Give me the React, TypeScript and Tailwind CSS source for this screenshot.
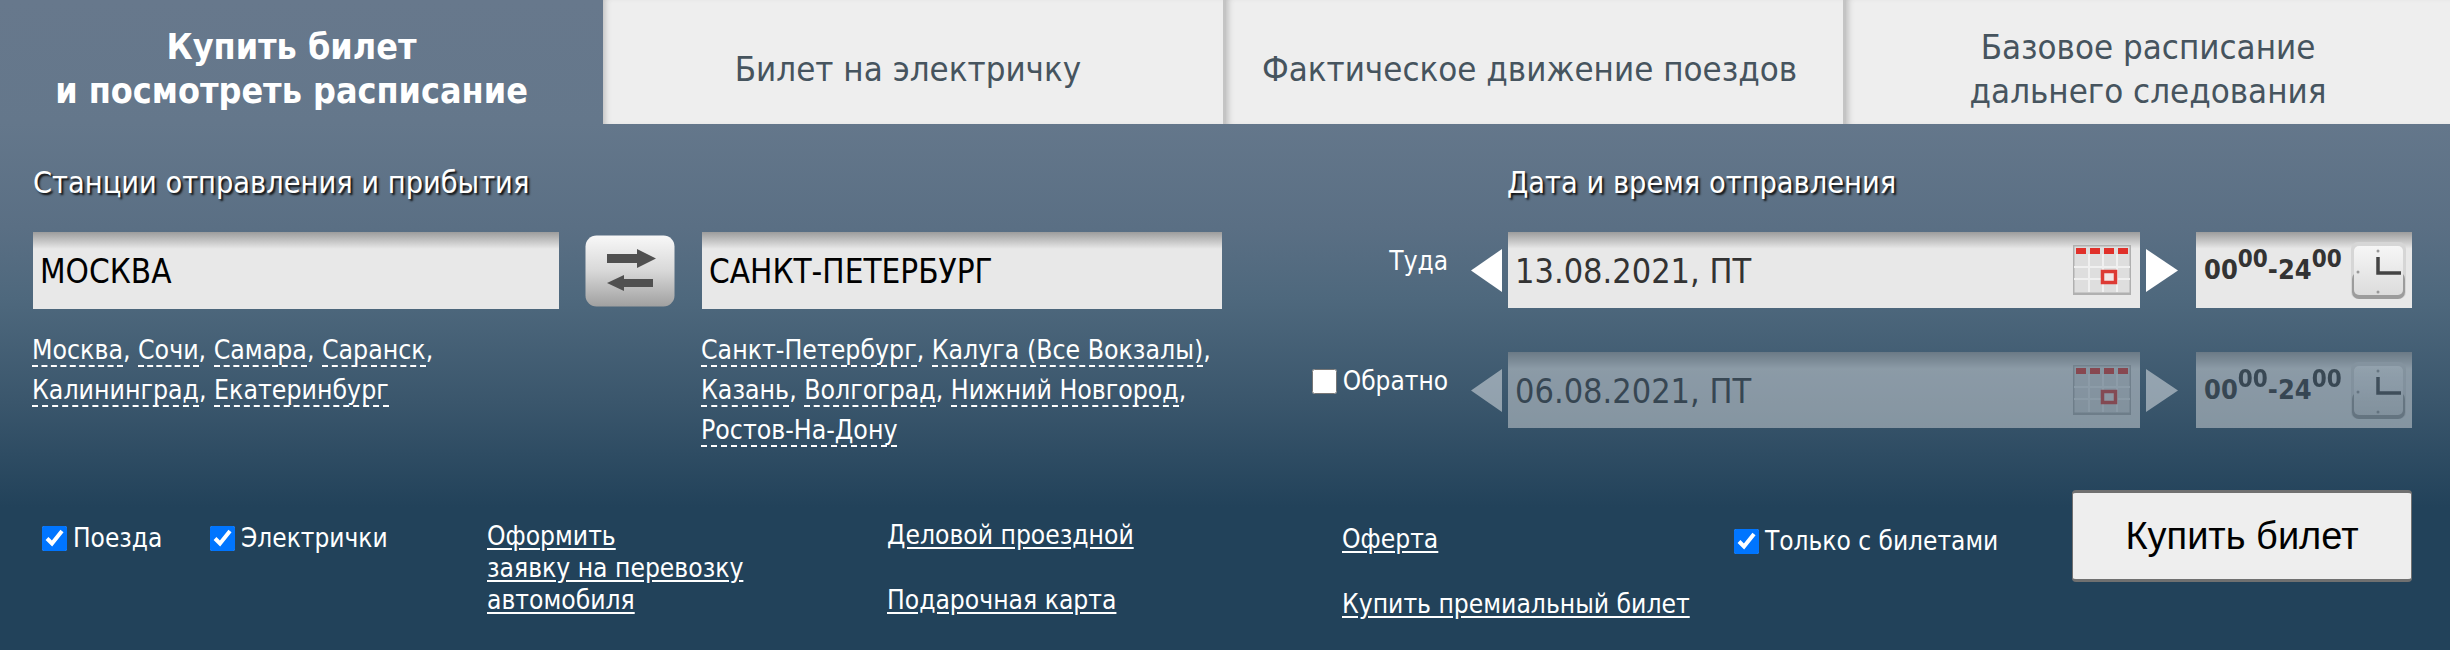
import React from 'react';

const FONT = "[font-family:'DejaVu_Sans_Condensed','DejaVu_Sans',sans-serif]";
const heading = "text-[30.4px] leading-[36px] whitespace-nowrap text-white [text-shadow:2px_2px_2px_#111]";
const fieldBg = "bg-[linear-gradient(#9c9c9c,#e8e8e8_22%,#e8e8e8)]";

const tabs = [
  ['Билет на электричку'],
  ['Фактическое движение поездов'],
  ['Базовое расписание', 'дальнего следования'],
];

const Tab = ({ lines, className }: { lines: string[]; className: string }) => (
  <div className={`bg-[#eeeeee] flex flex-col items-center justify-center pt-[14px] text-[34.6px] leading-[44px] whitespace-nowrap text-[#46545e] shadow-[inset_6px_0_6px_-4px_#bbb] ${className}`}>
    {lines.map((l) => <span key={l}>{l}</span>)}
  </div>
);

const CityLinks = ({ cities, breaks }: { cities: string[]; breaks: number[] }) => (
  <div className="mt-[21px] text-[26.4px] leading-[40px] whitespace-nowrap text-white">
    {cities.map((c, i) => (
      <React.Fragment key={c}>
        <span className="border-b-2 border-dashed border-white">{c}</span>
        {i < cities.length - 1 ? ', ' : ''}
        {breaks.includes(i) && <br />}
      </React.Fragment>
    ))}
  </div>
);

const StationInput = ({ value, className }: { value: string; className: string }) => (
  <input
    readOnly
    value={value}
    className={`h-[77px] pl-[7px] pt-[2px] text-[33px] text-black outline-none ${fieldBg} ${className}`}
  />
);

const SwapIcon = () => (
  <svg width="90" height="72" viewBox="0 0 90 72">
    <defs>
      <linearGradient id="swapBg" x1="0" y1="0" x2="0" y2="1">
        <stop offset="0" stopColor="#f8f8f8" />
        <stop offset="0.5" stopColor="#d8d8d8" />
        <stop offset="1" stopColor="#a0a0a0" />
      </linearGradient>
    </defs>
    <rect x="0.5" y="0.5" width="89" height="71" rx="11" fill="url(#swapBg)" />
    <path d="M22 19h30v-5l19 9.5-19 9.5v-5H22z" fill="#505050" />
    <path d="M68 44H39v-4L22 48l17 8v-4h29z" fill="#505050" />
  </svg>
);

const CalendarIcon = () => (
  <svg width="58" height="50" viewBox="0 0 58 50" className="shrink-0">
    <rect width="58" height="50" fill="#b0b0b0" />
    <rect x="1.5" y="1.5" width="55" height="46" fill="#dedede" />
    {[3, 17, 31, 45].map((x) => <rect key={x} x={x} y="3" width="10" height="6" fill="#e0302a" />)}
    {[15, 29, 43].map((x) => <rect key={x} x={x} y="9" width="2" height="38" fill="#f0f0f0" />)}
    {[21, 33].map((y) => <rect key={y} x="1" y={y} width="56" height="2" fill="#f0f0f0" />)}
    <rect x="29.5" y="26.5" width="13" height="11" fill="#f2e6e6" stroke="#dd3a34" strokeWidth="3.5" />
  </svg>
);

const ClockIcon = () => (
  <svg width="55" height="57" viewBox="0 0 55 57" className="shrink-0">
    <defs>
      <linearGradient id="clockFace" x1="0" y1="0" x2="0" y2="1">
        <stop offset="0" stopColor="#f6f6f6" />
        <stop offset="1" stopColor="#dcdcdc" />
      </linearGradient>
    </defs>
    <rect x="0" y="0" width="55" height="57" rx="7" fill="#d6d6d6" />
    <rect x="1" y="30" width="53" height="27" rx="7" fill="#9c9c9c" />
    <rect x="3" y="4" width="49" height="49" rx="5" fill="url(#clockFace)" />
    <path d="M27 15v16h23" fill="none" stroke="#444" strokeWidth="3.5" />
    <circle cx="27" cy="9" r="1.5" fill="#999" />
    <circle cx="7" cy="30" r="1.5" fill="#999" />
    <circle cx="27" cy="50" r="1.5" fill="#999" />
  </svg>
);

const Triangle = ({ left }: { left?: boolean }) => (
  <svg width="32" height="43" viewBox="0 0 32 43" className="shrink-0">
    <path d={left ? 'M32 0v43L1 21.5z' : 'M0 0v43l32-21.5z'} fill="#fff" />
  </svg>
);

const DateRow = ({ date, disabled, label }: { date: string; disabled?: boolean; label: React.ReactNode }) => (
  <div className="flex items-center">
    <div className="w-[208px] h-[59px] self-start flex items-center justify-end gap-[6px] text-[26px] text-white">
      {label}
    </div>
    <div className={`flex items-center ${disabled ? 'opacity-45' : ''}`}>
      <div className="ml-[22px]"><Triangle left /></div>
      <div className={`ml-[6px] w-[632px] h-[76px] pl-[7px] pr-[9px] flex items-center justify-between text-[34px] text-[#333] ${fieldBg}`}>
        <span className="pt-[2px]">{date}</span>
        <CalendarIcon />
      </div>
      <div className="ml-[6px]"><Triangle /></div>
      <div className={`ml-[18px] w-[216px] h-[76px] pl-[8px] pr-[6px] flex items-center justify-between text-[27px] font-bold text-[#333] ${fieldBg}`}>
        <span>00<sup className="text-[24px]">00</sup>-24<sup className="text-[24px]">00</sup></span>
        <ClockIcon />
      </div>
    </div>
  </div>
);

const Check = ({ label, checked = true }: { label: string; checked?: boolean }) => (
  <label className="flex items-center gap-[6px] text-[26px] whitespace-nowrap text-white">
    <input type="checkbox" readOnly checked={checked} className="w-[25px] h-[25px] m-0 accent-[#0075ff]" />
    {label}
  </label>
);

const BottomLink = ({ children }: { children: React.ReactNode }) => (
  <a className="underline underline-offset-[3px] text-[26.2px] leading-[32px] whitespace-nowrap text-white">{children}</a>
);

export default function App() {
  return (
    <div className={`w-[2450px] h-[650px] overflow-hidden flex flex-col bg-[linear-gradient(#67788c,#64778b_19%,#5a6f84_35%,#4e687d_46%,#3a566c_62%,#22425a_78%,#22425a)] ${FONT}`}>
      <div className="flex h-[124px]">
        <div className="w-[603px] flex flex-col items-center justify-center pt-[14px] pr-[20px] text-[35.6px] leading-[44px] font-bold whitespace-nowrap text-white">
          <span>Купить билет</span>
          <span>и посмотреть расписание</span>
        </div>
        <Tab lines={tabs[0]} className="w-[620px] pr-[10px]" />
        <Tab lines={tabs[1]} className="w-[620px] pr-[10px] border-l-[3px] border-[#c4c4c4]" />
        <Tab lines={tabs[2]} className="flex-1 border-l-[3px] border-[#c4c4c4]" />
      </div>

      <div className="flex pt-[41px]">
        <div className="w-[1240px] pl-[32px] shrink-0">
          <div className={`${heading} pl-px`}>Станции отправления и прибытия</div>
          <div className="flex mt-[31px]">
            <div className="w-[527px]">
              <StationInput value="МОСКВА" className="w-full ml-px" />
              <CityLinks cities={['Москва', 'Сочи', 'Самара', 'Саранск', 'Калининград', 'Екатеринбург']} breaks={[3]} />
            </div>
            <div className="ml-[27px] mt-[3px] shrink-0"><SwapIcon /></div>
            <div className="ml-[26px] w-[540px]">
              <StationInput value="САНКТ-ПЕТЕРБУРГ" className="w-[520px] ml-px" />
              <CityLinks cities={['Санкт-Петербург', 'Калуга (Все Вокзалы)', 'Казань', 'Волгоград', 'Нижний Новгород', 'Ростов-На-Дону']} breaks={[1, 4]} />
            </div>
          </div>
        </div>
        <div className="flex-1">
          <div className={`${heading} ml-[267px]`}>Дата и время отправления</div>
          <div className="mt-[31px] flex flex-col gap-[44px]">
            <DateRow date="13.08.2021, ПТ" label="Туда" />
            <DateRow
              date="06.08.2021, ПТ"
              disabled
              label={<>
                <input type="checkbox" readOnly className="w-[25px] h-[25px] m-0" />
                Обратно
              </>}
            />
          </div>
        </div>
      </div>

      <div className="flex pl-[42px] mt-[57px]">
        <div className="w-[168px] pt-[12px] shrink-0"><Check label="Поезда" /></div>
        <div className="w-[277px] pt-[12px] shrink-0"><Check label="Электрички" /></div>
        <div className="w-[400px] pt-[13px] shrink-0 flex flex-col">
          <BottomLink>Оформить</BottomLink>
          <BottomLink>заявку на перевозку</BottomLink>
          <BottomLink>автомобиля</BottomLink>
        </div>
        <div className="w-[455px] pt-[12px] shrink-0 flex flex-col gap-[33px]">
          <BottomLink>Деловой проездной</BottomLink>
          <BottomLink>Подарочная карта</BottomLink>
        </div>
        <div className="w-[392px] pt-[16px] shrink-0 flex flex-col gap-[33px]">
          <BottomLink>Оферта</BottomLink>
          <BottomLink>Купить премиальный билет</BottomLink>
        </div>
        <div className="w-[338px] pt-[15px] shrink-0"><Check label="Только с билетами" /></div>
        <button className="w-[340px] h-[92px] -mt-[17px] rounded-[4px] bg-[#eeeeee] border-y-[3px] border-x border-[#707070] text-[38px] text-black [font-family:'Liberation_Sans',sans-serif]">
          Купить билет
        </button>
      </div>
    </div>
  );
}
